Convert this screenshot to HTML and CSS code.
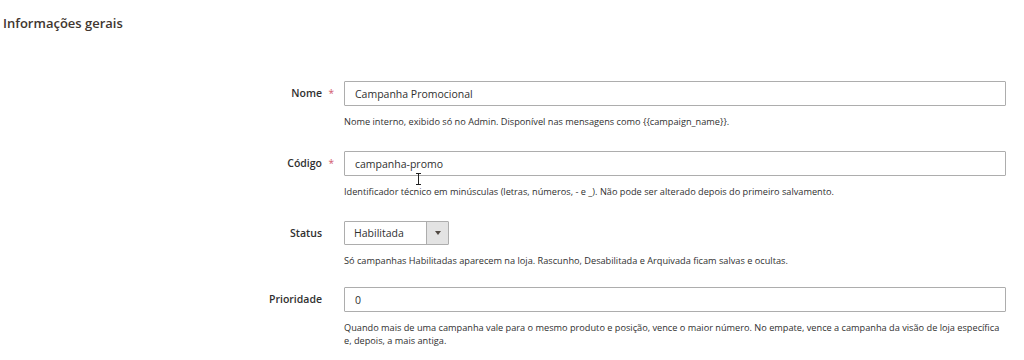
FILE: index.html
```html
<!DOCTYPE html>
<html lang="pt-BR">
<head>
    <meta charset="UTF-8">
    <meta name="viewport" content="width=device-width, initial-scale=1.0">
    <title>Campanha - Informações gerais</title>
    <link rel="stylesheet" href="styles.css">
</head>
<body>
    <div class="fieldset">
        <div class="legend">Informações gerais</div>

        <div class="field required">
            <label class="field-label" for="name">Nome</label>
            <div class="field-control">
                <input class="input-text" id="name" type="text" value="Campanha Promocional">
                <div class="field-note">Nome interno, exibido só no Admin. Disponível nas mensagens como {{campaign_name}}.</div>
            </div>
        </div>

        <div class="field required">
            <label class="field-label" for="code">Código</label>
            <div class="field-control">
                <input class="input-text" id="code" type="text" value="campanha-promo">
                <div class="field-note">Identificador técnico em minúsculas (letras, números, - e _). Não pode ser alterado depois do primeiro salvamento.</div>
                <!-- cursor do mouse na captura -->
                <svg class="mouse-cursor" width="7" height="12" viewBox="0 0 7 12">
                    <path d="M1 0.5h5M3.5 0.5v11M1 11.5h5" stroke="#222" stroke-width="1" fill="none"/>
                </svg>
            </div>
        </div>

        <div class="field field-select">
            <label class="field-label" for="status">Status</label>
            <div class="field-control">
                <div class="select-box">
                    <select class="select-input" id="status">
                        <option>Habilitada</option>
                        <option>Rascunho</option>
                        <option>Desabilitada</option>
                        <option>Arquivada</option>
                    </select>
                    <span class="select-arrow"></span>
                </div>
                <div class="field-note">Só campanhas Habilitadas aparecem na loja. Rascunho, Desabilitada e Arquivada ficam salvas e ocultas.</div>
            </div>
        </div>

        <div class="field">
            <label class="field-label" for="priority">Prioridade</label>
            <div class="field-control">
                <input class="input-text" id="priority" type="text" value="0">
                <div class="field-note">Quando mais de uma campanha vale para o mesmo produto e posição, vence o maior número. No empate, vence a campanha da visão de loja específica e, depois, a mais antiga.</div>
            </div>
        </div>
    </div>
</body>
</html>
```

FILE: styles.css
```css
* {
    margin: 0;
    padding: 0;
    box-sizing: border-box;
}

body {
    font-family: 'Open Sans', 'Noto Sans', sans-serif;
    background: #fff;
    color: #303030;
    width: 1024px;
    height: 360px;
    overflow: hidden;
}

.fieldset {
    padding: 14px 0 0 3px;
}

.legend {
    font-size: 13px;
    font-weight: 600;
    line-height: 18px;
    color: #41362f;
    margin-bottom: 49px;
}

.field {
    display: flex;
    margin-bottom: 23px;
}

.field-select {
    margin-bottom: 20px;
}

.field-label {
    position: relative;
    width: 341px;
    padding-right: 22px;
    text-align: right;
    font-size: 10.5px;
    font-weight: 600;
    line-height: 25px;
    color: #303030;
}

.field-select .field-label {
    line-height: 24px;
}

.required .field-label::after {
    content: '*';
    position: absolute;
    right: 10px;
    top: 0;
    color: #d1586b;
    font-size: 10px;
    font-weight: 400;
}

.field-control {
    position: relative;
    width: 662px;
}

.input-text {
    display: block;
    width: 100%;
    height: 25px;
    padding: 0 10px;
    border: 1px solid #adadad;
    border-radius: 1px;
    font-family: inherit;
    font-size: 10.5px;
    color: #303030;
    background: #fff;
    outline: none;
}

.select-box {
    display: flex;
    width: 105px;
    height: 24px;
    border: 1px solid #adadad;
    border-radius: 1px;
    background: #fff;
}

.select-input {
    flex: 1;
    min-width: 0;
    padding: 0 9px;
    border: none;
    background: transparent;
    font-family: inherit;
    font-size: 10.5px;
    color: #303030;
    appearance: none;
    -webkit-appearance: none;
    outline: none;
}

.select-arrow {
    display: flex;
    align-items: center;
    justify-content: center;
    width: 22px;
    border-left: 1px solid #adadad;
    background: #e3e3e3;
}

.select-arrow::before {
    content: '';
    border-left: 3px solid transparent;
    border-right: 3px solid transparent;
    border-top: 4px solid #514943;
}

.field-note {
    margin-top: 9px;
    font-size: 9.2px;
    line-height: 13px;
    color: #303030;
}

.mouse-cursor {
    position: absolute;
    left: 71px;
    top: 22px;
}
```
